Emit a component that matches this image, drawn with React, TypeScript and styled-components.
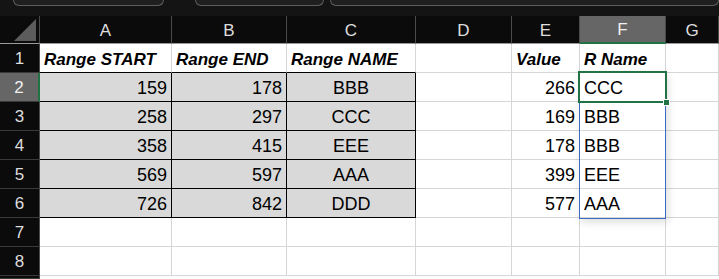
import React from "react";
import styled, { createGlobalStyle, css } from "styled-components";

const GlobalStyle = createGlobalStyle`
  html, body {
    margin: 0;
    padding: 0;
    background: #ffffff;
    overflow: hidden;
  }
  * {
    box-sizing: border-box;
  }
`;

const COLS = [40, 132, 115, 129, 96, 68, 86];
const LETTERS = ["A", "B", "C", "D", "E", "F", "G"];

const Page = styled.div`
  width: 719px;
  height: 279px;
  display: flex;
  flex-direction: column;
  font-family: "Liberation Sans", Arial, sans-serif;
`;

const TopBar = styled.div`
  height: 16px;
  background: #141414;
  display: flex;
  align-items: flex-start;
  padding-left: 13px;
  gap: 31px;
`;

const BarBox = styled.div<{ $w: number; $flex?: boolean }>`
  height: 6px;
  width: ${({ $w }) => $w}px;
  ${({ $flex }) =>
    $flex &&
    css`
      flex: 1;
    `}
  background: #1f1f1f;
  border: 1px solid #5e5e5e;
  border-top: none;
  border-radius: 0 0 6px 6px;
`;

const BarBoxTight = styled(BarBox)`
  margin-left: -25px;
`;

const Sheet = styled.div`
  position: relative;
  flex: 1;
  display: grid;
  grid-template-columns: ${COLS.map((c) => `${c}px`).join(" ")} 1fr;
  grid-template-rows: 28px repeat(8, 29px) 1fr;
  background: #ffffff;
  overflow: hidden;
`;

const Corner = styled.div`
  background: #0b0b0b;
  border-right: 1px solid #4a4a4a;
  border-bottom: 1px solid #9a9a9a;
  position: relative;
`;

const CornerTriangle = styled.svg`
  position: absolute;
  right: 3px;
  bottom: 2px;
`;

const ColHead = styled.div<{ $sel?: boolean }>`
  background: ${({ $sel }) => ($sel ? "#666666" : "#0b0b0b")};
  color: ${({ $sel }) => ($sel ? "#f0f0f0" : "#dedede")};
  border-right: 1px solid #4a4a4a;
  border-bottom: ${({ $sel }) => ($sel ? "2px solid #217346" : "1px solid #9a9a9a")};
  display: flex;
  align-items: center;
  justify-content: center;
  font-size: 17px;
  padding-top: 2px;
`;

const RowHead = styled.div<{ $sel?: boolean }>`
  background: ${({ $sel }) => ($sel ? "#666666" : "#0b0b0b")};
  color: ${({ $sel }) => ($sel ? "#f0f0f0" : "#dedede")};
  border-right: ${({ $sel }) => ($sel ? "2px solid #217346" : "1px solid #4a4a4a")};
  border-bottom: 1px solid #3a3a3a;
  display: flex;
  align-items: center;
  justify-content: center;
  font-size: 17px;
  padding-top: 2px;
`;

const Cell = styled.div<{
  $align?: "left" | "right" | "center";
  $bold?: boolean;
  $boxed?: boolean;
  $topRule?: boolean;
}>`
  display: flex;
  align-items: center;
  justify-content: ${({ $align }) =>
    $align === "right" ? "flex-end" : $align === "center" ? "center" : "flex-start"};
  padding: 3px 4px 0 4px;
  font-size: ${({ $bold }) => ($bold ? "17px" : "18px")};
  font-weight: ${({ $bold }) => ($bold ? 700 : 400)};
  font-style: ${({ $bold }) => ($bold ? "italic" : "normal")};
  color: #000000;
  white-space: nowrap;
  overflow: visible;
  background: ${({ $boxed }) => ($boxed ? "#d9d9d9" : "transparent")};
  border-right: 1px solid ${({ $boxed }) => ($boxed ? "#000000" : "#d6d6d6")};
  border-bottom: 1px solid
    ${({ $boxed, $topRule }) => ($boxed || $topRule ? "#000000" : "#d6d6d6")};
`;

const SpillRange = styled.div`
  position: absolute;
  left: 579px;
  top: 56px;
  width: 87px;
  height: 147px;
  border: 1px solid #3a6cc2;
  box-shadow: 2px 3px 8px rgba(0, 0, 0, 0.14);
  pointer-events: none;
`;

const ActiveCell = styled.div`
  position: absolute;
  left: 578px;
  top: 55px;
  width: 89px;
  height: 32px;
  border: 2px solid #217346;
  pointer-events: none;
`;

const FillHandle = styled.div`
  position: absolute;
  left: 663px;
  top: 83px;
  width: 7px;
  height: 7px;
  background: #217346;
  border: 1px solid #ffffff;
`;

type Row = (string | number | null)[];

const rows: Row[] = [
  ["Range START", "Range END", "Range NAME", null, "Value", "R Name", null],
  [159, 178, "BBB", null, 266, "CCC", null],
  [258, 297, "CCC", null, 169, "BBB", null],
  [358, 415, "EEE", null, 178, "BBB", null],
  [569, 597, "AAA", null, 399, "EEE", null],
  [726, 842, "DDD", null, 577, "AAA", null],
  [null, null, null, null, null, null, null],
  [null, null, null, null, null, null, null],
];

const alignFor = (r: number, c: number): "left" | "right" | "center" => {
  if (r === 0) return "left";
  if (c === 2) return "center";
  if (c === 5) return "left";
  return "right";
};

const App: React.FC = () => {
  return (
    <Page>
      <GlobalStyle />
      <TopBar>
        <BarBox $w={151} />
        <BarBox $w={129} />
        <BarBoxTight $w={0} $flex />
      </TopBar>
      <Sheet>
        <Corner>
          <CornerTriangle width="22" height="22" viewBox="0 0 22 22">
            <polygon points="22,0 22,22 0,22" fill="#5c5c5c" />
          </CornerTriangle>
        </Corner>
        {LETTERS.map((l) => (
          <ColHead key={l} $sel={l === "F"}>
            {l}
          </ColHead>
        ))}
        {rows.map((row, r) => (
          <React.Fragment key={r}>
            <RowHead $sel={r === 1}>{r + 1}</RowHead>
            {row.map((v, c) => (
              <Cell
                key={c}
                $align={alignFor(r, c)}
                $bold={r === 0}
                $boxed={r >= 1 && r <= 5 && c <= 2}
                $topRule={r === 0 && c <= 2}
              >
                {v}
              </Cell>
            ))}
          </React.Fragment>
        ))}
        <RowHead />
        <SpillRange />
        <ActiveCell />
        <FillHandle />
      </Sheet>
    </Page>
  );
};

export default App;
